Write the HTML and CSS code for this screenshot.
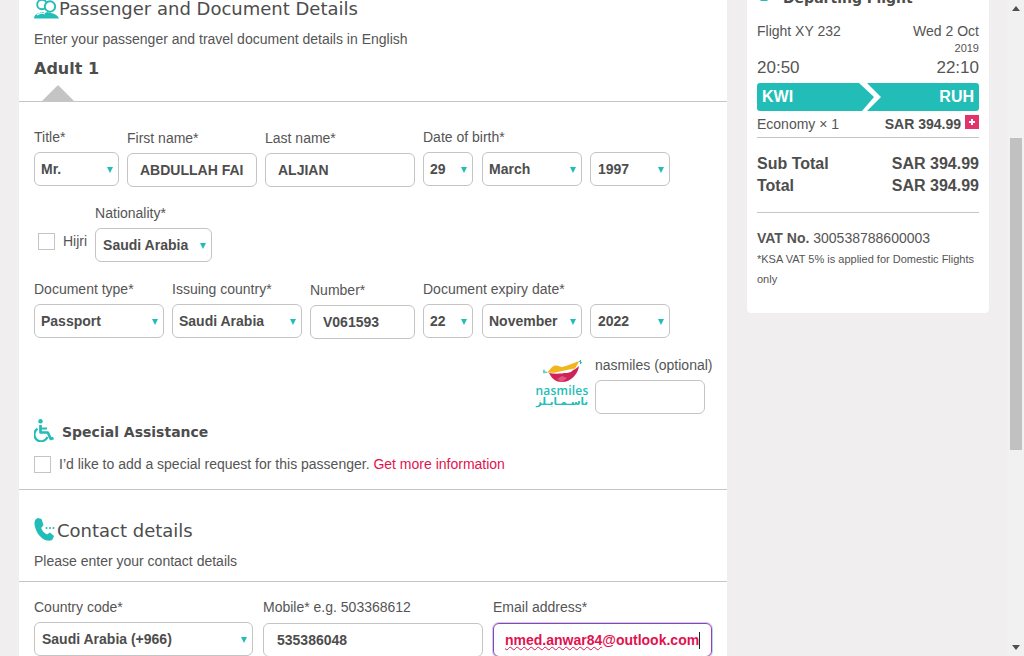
FILE: index.html
```html
<!DOCTYPE html>
<html lang="en">

<head>
    <meta charset="UTF-8">
    <meta name="viewport" content="width=device-width, initial-scale=1.0">
    <title>Passenger details</title>
    <link rel="stylesheet" href="styles.css">
</head>

<body>
    <div class="viewport">
        <div class="content">
            <main class="card-main">
                <section class="section">
                    <h2 class="heading">
                        <svg class="icon-people" viewBox="0 0 25 20" width="25" height="20">
                            <path d="M0 19.500c0-3 2-4.500 5-5.500l3-1 3 1 2-1 4 1c4 1 7 2.500 8 5.500z" fill="#22bdb7" />
                            <path d="M3 16c1-1 3-1.500 5-2l3 1" fill="none" stroke="#fff" stroke-width="1.200" />
                            <circle cx="8" cy="5.500" r="4.800" fill="#fff" stroke="#22bdb7" stroke-width="1.900" />
                            <circle cx="16" cy="7.500" r="5.200" fill="#fff" stroke="#22bdb7" stroke-width="1.900" />
                        </svg>
                        <span>Passenger and Document Details</span>
                    </h2>
                    <p class="hint hint-top">Enter your passenger and travel document details in English</p>
                    <h3 class="adult">Adult 1</h3>
                </section>
                <div class="tab-arrow"></div>
                <div class="rule"></div>

                <section class="section">
                    <div class="row row-first">
                        <div class="field w85"><label>Title*</label>
                            <div class="select">Mr.</div>
                        </div>
                        <div class="field field-input w130"><label>First name*</label>
                            <div class="input">ABDULLAH FAI</div>
                        </div>
                        <div class="field field-input w150"><label>Last name*</label>
                            <div class="input">ALJIAN</div>
                        </div>
                        <div class="field w50"><label class="nowrap">Date of birth*</label>
                            <div class="select">29</div>
                        </div>
                        <div class="field w100 gap-extra"><label>&nbsp;</label>
                            <div class="select">March</div>
                        </div>
                        <div class="field w80"><label>&nbsp;</label>
                            <div class="select select-wide">1997</div>
                        </div>
                    </div>

                    <div class="row row-second">
                        <div class="hijri"><span class="checkbox"></span><span class="hijri-text">Hijri</span></div>
                        <div class="field w117"><label>Nationality*</label>
                            <div class="select select-wide">Saudi Arabia</div>
                        </div>
                    </div>

                    <div class="row row-third">
                        <div class="field w130"><label>Document type*</label>
                            <div class="select">Passport</div>
                        </div>
                        <div class="field w130"><label>Issuing country*</label>
                            <div class="select">Saudi Arabia</div>
                        </div>
                        <div class="field field-input w105"><label>Number*</label>
                            <div class="input">V061593</div>
                        </div>
                        <div class="field w50"><label class="nowrap">Document expiry date*</label>
                            <div class="select">22</div>
                        </div>
                        <div class="field w100 gap-extra"><label>&nbsp;</label>
                            <div class="select">November</div>
                        </div>
                        <div class="field w80"><label>&nbsp;</label>
                            <div class="select select-wide">2022</div>
                        </div>
                    </div>

                    <div class="row row-miles">
                        <div class="miles-logo">
                            <svg viewBox="0 0 52 24" width="52" height="24">
                                <path d="M11 12.500C14 10 16 6 19 5.500c3-.5 5 1.500 7 1.500 5-1 11-4 17-6-2 5-4 9-9 10-7 1.500-15 2-23 1.500z" fill="#f2b51d" />
                                <path d="M13 13c8 1.500 22 1 30-7-1 8-8 16-17 16-6 0-10-3-13-9z" fill="#cf2358" />
                                <path d="M19 12.500l19-4-3 3.500c-5 1.500-11 1.500-16 .5z" fill="#fff" />
                                <path d="M26 16l5 2-5 4-5-3z" fill="#e0557f" />
                                <path d="M7 11.500l4 1M8 9.500v4M43 1l3 2M44.500 0v4" stroke="#22bdb7" stroke-width="1" />
                            </svg>
                            <span class="miles-en">nasmiles</span>
                            <span class="miles-ar" lang="ar">ناسـمـايـلز</span>
                        </div>
                        <div class="field w117"><label class="nowrap">nasmiles (optional)</label>
                            <div class="input input-miles"></div>
                        </div>
                    </div>

                    <div class="assist">
                        <svg viewBox="0 0 20 23" width="20" height="23">
                            <circle cx="6.500" cy="2.200" r="2.200" fill="#22bdb7" />
                            <path d="M6.500 6v7.500h7.300l3 6.500 2.700-1" fill="none" stroke="#22bdb7" stroke-width="2.700" stroke-linejoin="round" />
                            <path d="M7 9.500h6" stroke="#22bdb7" stroke-width="2" />
                            <path d="M3.500 9.800a6.800 6.800 0 1 0 10 8.200" fill="none" stroke="#22bdb7" stroke-width="2.200" />
                        </svg>
                        <span class="title-text">Special Assistance</span>
                    </div>
                    <div class="request">
                        <span class="checkbox"></span>
                        <span>I’d like to add a special request for this passenger. <a class="link">Get more information</a></span>
                    </div>
                </section>
                <div class="rule rule-contact"></div>

                <section class="section">
                    <h2 class="heading heading-contact">
                        <svg viewBox="0 0 21 23" width="21" height="23">
                            <path d="M4 0l3.500 1 2 6-2.300 3c1 3 2.800 5 5.800 6.500l3-2 4 3.500-1.500 3.500c-1.500 1.500-4.500 1.500-7.500.5C5 19 1 12 .5 6 .3 3 1.500.5 4 0z" fill="#22bdb7" />
                            <circle cx="12.500" cy="10" r="1" fill="#22bdb7" />
                            <circle cx="16" cy="10" r="1" fill="#22bdb7" />
                            <circle cx="19.500" cy="10" r="1" fill="#22bdb7" />
                        </svg>
                        <span class="title-text">Contact details</span>
                    </h2>
                    <p class="hint hint-contact">Please enter your contact details</p>
                </section>
                <div class="rule rule-fields"></div>

                <section class="section">
                    <div class="row row-contact">
                        <div class="field w219"><label>Country code*</label>
                            <div class="select select-wide">Saudi Arabia (+966)</div>
                        </div>
                        <div class="field field-low w220"><label>Mobile* e.g. 503368612</label>
                            <div class="input input-mobile">535386048</div>
                        </div>
                        <div class="field field-low w219"><label>Email address*</label>
                            <div class="input input-focus"><span class="misspelled">nmed.anwar84</span>@outlook.com<span class="caret"></span></div>
                        </div>
                    </div>
                </section>
            </main>

            <aside class="card-side">
                <h4 class="side-title">
                    <svg viewBox="0 0 14 8" width="14" height="8">
                        <path d="M3 7l4-4 4 4" fill="#22bdb7" />
                    </svg>
                    <span>Departing Flight</span>
                </h4>
                <div class="line flight-line"><span>Flight XY 232</span><span>Wed 2 Oct</span></div>
                <div class="year">2019</div>
                <div class="line times"><span>20:50</span><span>22:10</span></div>
                <div class="route">
                    <span>KWI</span><span>RUH</span>
                    <svg class="route-chevron" viewBox="0 0 26 28" width="26" height="28">
                        <path d="M0 0h8l14 14L8 28H3l12-14z" fill="#fff" />
                    </svg>
                </div>
                <div class="line fare"><span>Economy × 1</span><span class="fare-price"><b>SAR 394.99</b><i class="plus"></i></span></div>
                <div class="rule side-rule"></div>
                <div class="line total"><span>Sub Total</span><span>SAR 394.99</span></div>
                <div class="line total"><span>Total</span><span>SAR 394.99</span></div>
                <div class="rule side-rule-vat"></div>
                <div class="vat"><b>VAT No.</b> 300538788600003</div>
                <p class="vat-note">*KSA VAT 5% is applied for Domestic Flights only</p>
            </aside>
        </div>

        <div class="scrollbar">
            <span class="arrow-up"></span>
            <span class="thumb"></span>
            <span class="arrow-down"></span>
        </div>
    </div>
</body>

</html>
```

FILE: styles.css
```css
* {
    box-sizing: border-box;
}

body {
    margin: 0;
    padding: 0;
    font-family: "Liberation Sans", Arial, sans-serif;
    font-size: 14px;
    color: #555;
    background-color: #f0eeee;
}

.viewport {
    display: flex;
    height: 656px;
    overflow: hidden;
}

.content {
    display: flex;
    align-items: flex-start;
    gap: 20px;
    margin-top: -20px;
    padding-left: 19px;
}

/* main form card */
.card-main {
    width: 708px;
    padding-top: 19px;
    background: #fff;
}

.section {
    padding: 0 15px;
}

.rule {
    height: 1px;
    background-color: #c6c6c6;
}

.heading {
    display: flex;
    align-items: center;
    height: 19px;
    margin: 0;
    font-family: "DejaVu Sans", Verdana, sans-serif;
    font-size: 18px;
    font-weight: normal;
    color: #4d4d4d;
}

.title-text {
    padding-top: 2px;
}

.hint {
    margin: 0;
    line-height: 16px;
}

.hint-top {
    margin-top: 13px;
}

.adult {
    margin: 12px 0 0;
    font-family: "DejaVu Sans", Verdana, sans-serif;
    font-size: 16px;
    line-height: 20px;
    color: #4d4d4d;
}

.tab-arrow {
    width: 0;
    margin: 6px 0 0 23px;
    border-left: 16px solid transparent;
    border-right: 16px solid transparent;
    border-bottom: 16px solid #c4c4c4;
}

/* form rows */
.row {
    display: flex;
    align-items: flex-start;
    gap: 8px;
}

.row-first {
    margin-top: 27px;
}

.row-second {
    margin-top: 18px;
}

.row-third {
    margin-top: 19px;
}

.row-miles {
    justify-content: flex-end;
    gap: 7px;
    margin-top: 18px;
}

.row-contact {
    gap: 10px;
    margin-top: 17px;
    height: 57px;
}

.field label {
    display: block;
    height: 16px;
    margin-bottom: 7px;
    line-height: 16px;
}

.field-input {
    padding-top: 1px;
}

.field-low label {
    margin-bottom: 8px;
}

.nowrap {
    white-space: nowrap;
}

.select,
.input {
    height: 34px;
    border: 1px solid #c4c4c4;
    border-radius: 6px;
    font-weight: bold;
    line-height: 32px;
    color: #4d4d4d;
    white-space: nowrap;
    overflow: hidden;
}

.select {
    position: relative;
    padding-left: 6px;
}

.select-wide {
    padding-left: 7px;
}

.select::after {
    content: "";
    position: absolute;
    right: 5px;
    top: 14px;
    border-left: 3.5px solid transparent;
    border-right: 3.5px solid transparent;
    border-top: 6px solid #22bdb7;
}

.input {
    padding-left: 12px;
}

.input-mobile {
    padding-left: 13px;
}

.input-focus {
    padding-left: 11px;
    border-color: #a23aa8;
    box-shadow: 0 0 0 1px #b9d2f7;
    color: #e0134f;
    overflow: visible;
}

.misspelled {
    text-decoration: underline wavy #e0134f 1px;
}

.caret {
    display: inline-block;
    width: 1px;
    height: 17px;
    vertical-align: -4px;
    background-color: #222;
}

.w50 { width: 50px; }
.w80 { width: 80px; }
.w85 { width: 85px; }
.w100 { width: 100px; }
.w105 { width: 105px; }
.w117 { width: 117px; }
.w130 { width: 130px; }
.w150 { width: 150px; }
.w219 { width: 219px; }
.w220 { width: 220px; }

.gap-extra {
    margin-left: 1px;
}

.checkbox {
    display: block;
    flex: none;
    width: 17px;
    height: 17px;
    border: 1px solid #c4c4c4;
    background: #fff;
}

.hijri {
    display: flex;
    align-items: center;
    gap: 8px;
    margin: 28px 0 0 4px;
}

.hijri-text {
    line-height: 17px;
}

.input-miles {
    width: 110px;
}

.miles-logo {
    display: flex;
    flex-direction: column;
    align-items: center;
    width: 52px;
    margin-top: 3px;
    color: #22bdb7;
}

.miles-logo svg {
    display: block;
}

.miles-en {
    margin-top: 1px;
    font-family: "Open Sans", sans-serif;
    font-size: 12px;
    font-weight: 600;
    letter-spacing: .2px;
    line-height: 11px;
}

.miles-ar {
    font-family: "DejaVu Sans", sans-serif;
    font-size: 10px;
    font-weight: bold;
    line-height: 11px;
}

.assist {
    display: flex;
    align-items: center;
    gap: 8px;
    margin-top: 5px;
    height: 23px;
    font-family: "DejaVu Sans", Verdana, sans-serif;
    font-size: 14px;
    font-weight: bold;
    color: #4d4d4d;
}

.request {
    display: flex;
    align-items: flex-start;
    gap: 8px;
    margin-top: 14px;
    height: 17px;
    line-height: 16px;
}

.link {
    color: #e0134f;
}

.rule-contact {
    margin-top: 16px;
}

.heading-contact {
    gap: 2px;
    height: 23px;
    margin-top: 28px;
}

.hint-contact {
    margin-top: 12px;
}

.rule-fields {
    margin-top: 12px;
}

/* fare summary */
.card-side {
    width: 242px;
    padding: 10px 10px 24px;
    background: #fff;
    border-radius: 4px;
}

.side-title {
    display: flex;
    align-items: center;
    gap: 12px;
    height: 16px;
    margin: 0 0 17px;
    font-family: "DejaVu Sans", Verdana, sans-serif;
    font-size: 14px;
    color: #4d4d4d;
}

.line {
    display: flex;
    justify-content: space-between;
}

.flight-line {
    line-height: 16px;
}

.year {
    margin-top: 3px;
    font-size: 11px;
    line-height: 12px;
    text-align: right;
}

.times {
    margin-top: 4px;
    font-size: 17px;
    line-height: 20px;
}

.route {
    position: relative;
    display: flex;
    justify-content: space-between;
    height: 28px;
    margin-top: 5px;
    padding: 0 5px;
    border-radius: 3px;
    background-color: #22bdb7;
    font-size: 16px;
    font-weight: bold;
    line-height: 27px;
    color: #fff;
}

.route-chevron {
    position: absolute;
    left: 102px;
    top: 0;
}

.fare {
    margin-top: 5px;
    line-height: 16px;
}

.fare-price {
    display: flex;
    gap: 4px;
}

.fare-price b {
    color: #4d4d4d;
}

.plus {
    width: 14px;
    height: 14px;
    margin-top: -1px;
    background-color: #e2336b;
    background-image: linear-gradient(#fff, #fff), linear-gradient(#fff, #fff);
    background-position: center;
    background-repeat: no-repeat;
    background-size: 6px 2px, 2px 6px;
}

.side-rule {
    margin-top: 5px;
}

.total {
    font-size: 16px;
    font-weight: bold;
    line-height: 22px;
    color: #4d4d4d;
}

.side-rule + .total {
    margin-top: 15px;
}

.side-rule-vat {
    margin-top: 15px;
}

.vat {
    margin-top: 17px;
    line-height: 16px;
}

.vat-note {
    margin: 3px 0 0;
    font-size: 11px;
    line-height: 20px;
}

/* page scrollbar */
.scrollbar {
    position: relative;
    flex: none;
    width: 17px;
    margin-left: auto;
    background-color: #f1f1f1;
}

.thumb {
    display: block;
    width: 12px;
    height: 312px;
    margin: 138px 0 0 3px;
    background-color: #c1c1c1;
}

.arrow-up,
.arrow-down {
    position: absolute;
    left: 5px;
    border-left: 4px solid transparent;
    border-right: 4px solid transparent;
}

.arrow-up {
    top: 6px;
    border-bottom: 5px solid #505050;
}

.arrow-down {
    bottom: 6px;
    border-top: 5px solid #505050;
}
```
